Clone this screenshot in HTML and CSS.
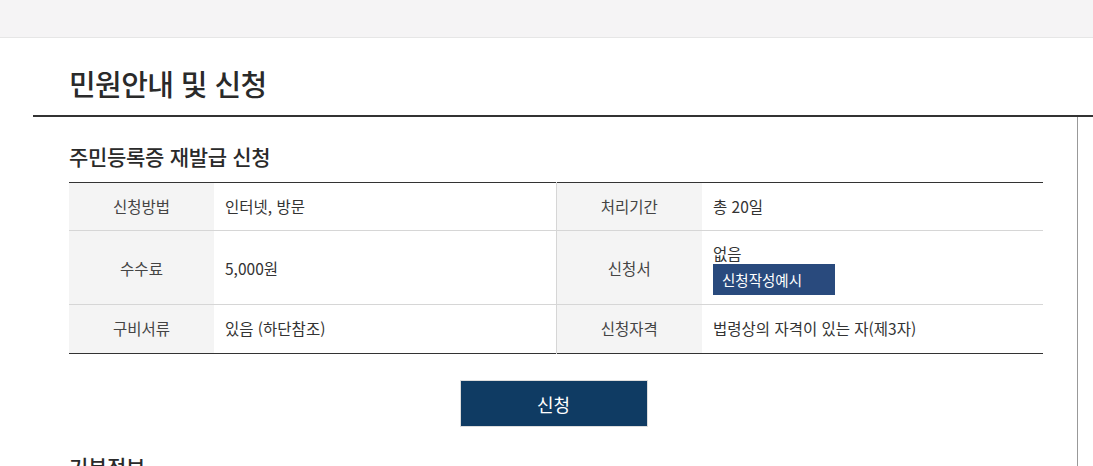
FILE: index.html
```html
<!DOCTYPE html>
<html lang="ko">
<head>
    <meta charset="UTF-8">
    <meta name="viewport" content="width=device-width, initial-scale=1.0">
    <title>민원안내 및 신청</title>
    <link rel="stylesheet" href="styles.css">
</head>
<body>

<div class="topbar"></div>

<div class="page-head">
    <h2 class="page-title">민원안내 및 신청</h2>
</div>

<div class="content-wrap">
    <div class="content">
        <h3 class="sub-title">주민등록증 재발급 신청</h3>

        <table class="info-table">
            <colgroup>
                <col style="width: 145px">
                <col style="width: 342px">
                <col style="width: 146px">
                <col style="width: 341px">
            </colgroup>
            <tr>
                <th>신청방법</th>
                <td>인터넷, 방문</td>
                <th class="col-split">처리기간</th>
                <td>총 20일</td>
            </tr>
            <tr class="tall-row">
                <th>수수료</th>
                <td>5,000원</td>
                <th class="col-split">신청서</th>
                <td>
                    <div class="form-none">없음</div>
                    <button class="example-btn">신청작성예시</button>
                </td>
            </tr>
            <tr class="last-row">
                <th>구비서류</th>
                <td>있음 (하단참조)</td>
                <th class="col-split">신청자격</th>
                <td>법령상의 자격이 있는 자(제3자)</td>
            </tr>
        </table>

        <div class="btn-area">
            <button class="apply-btn">신청</button>
        </div>

        <h3 class="sub-title">기본정보</h3>
    </div>
</div>

</body>
</html>
```

FILE: styles.css
```css
body {
    margin: 0;
    padding: 0;
    background-color: #fff;
    color: #333;
    font-family: "Noto Sans CJK KR", "Noto Sans", sans-serif;
    overflow: hidden;
}

.topbar {
    height: 37px;
    background-color: #f5f4f5;
    border-bottom: 1px solid #e6e6e6;
}

.page-head {
    padding: 25px 0 12px 69px;
}

.page-title {
    margin: 0;
    font-size: 29px;
    line-height: 40px;
    font-weight: 500;
    letter-spacing: -0.6px;
    color: #2a2a2a;
}

.content-wrap {
    margin-left: 33px;
    border-top: 2px solid #333;
}

.content {
    width: 975px;
    padding: 0 33px 0 36px;
    border-right: 1px solid #999;
}

.sub-title {
    margin: 0;
    padding-top: 25px;
    margin-bottom: 12px;
    font-size: 21px;
    line-height: 28px;
    font-weight: 500;
    letter-spacing: -0.3px;
    color: #2a2a2a;
}

.info-table {
    width: 974px;
    border-collapse: collapse;
    table-layout: fixed;
    border-top: 1px solid #333;
    border-bottom: 1px solid #333;
    font-size: 15.5px;
}

.info-table th,
.info-table td {
    padding: 12px 11px;
    line-height: 23px;
    border-bottom: 1px solid #d6d6d6;
    vertical-align: middle;
}

.info-table th {
    background-color: #f4f4f4;
    font-weight: 400;
    color: #444;
    text-align: center;
}

.info-table td {
    text-align: left;
    color: #333;
}

.info-table th.col-split {
    border-left: 1px solid #d6d6d6;
}

.info-table .tall-row td,
.info-table .tall-row th {
    padding-top: 11px;
    padding-bottom: 9px;
}

.info-table .last-row td,
.info-table .last-row th {
    padding-bottom: 13px;
    border-bottom: none;
}

.form-none {
    line-height: 22px;
}

.example-btn {
    display: block;
    width: 122px;
    height: 31px;
    padding: 0 0 0 9px;
    border: none;
    background-color: #294a7d;
    color: #fff;
    font-family: inherit;
    font-size: 14.5px;
    text-align: left;
}

.btn-area {
    display: flex;
    justify-content: center;
    padding: 26px 0 0;
}

.apply-btn {
    width: 188px;
    height: 47px;
    margin-right: 6px;
    background-color: #0f3b63;
    border: 1px solid #ddd;
    color: #fff;
    font-family: inherit;
    font-size: 18px;
}
```
